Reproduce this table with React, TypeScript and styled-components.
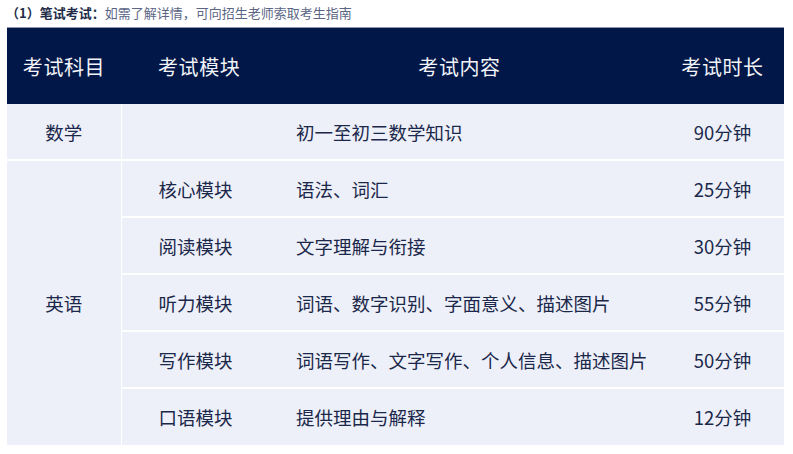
import React from "react";
import styled, { createGlobalStyle } from "styled-components";

const Global = createGlobalStyle`
  html, body { margin: 0; padding: 0; background: #fff; }
  body { font-family: "Noto Sans CJK SC", "Noto Sans", sans-serif; }
`;

const Page = styled.div`
  width: 793px;
  padding: 0 9px 0 7px;
  box-sizing: border-box;
`;

const Title = styled.p`
  margin: 0 0 0 -1px;
  height: 27px;
  line-height: 26px;
  font-size: 13px;
  color: #5b6685;
  white-space: nowrap;
  b {
    color: #222c48;
    font-weight: 700;
  }
`;

const Table = styled.table`
  width: 777px;
  border-collapse: collapse;
  table-layout: fixed;
  border-top: 1px solid #8c95ad;
`;

const Head = styled.th<{ $align?: string; $pad?: number }>`
  height: 76px;
  padding: 0 0 0 ${(p) => p.$pad ?? 0}px;
  background: #011747;
  color: #f1f3f8;
  font-size: 20px;
  font-weight: 400;
  text-align: ${(p) => p.$align ?? "center"};
  letter-spacing: 0.6px;
`;

const Cell = styled.td<{ $align?: string; $pad?: number; $divide?: boolean }>`
  height: 55px;
  padding: 0 0 0 ${(p) => p.$pad ?? 0}px;
  background: #edf0f8;
  color: #1b284b;
  font-size: 18.5px;
  text-align: ${(p) => p.$align ?? "left"};
  border-bottom: 2px solid #fff;
  border-right: ${(p) => (p.$divide ? "1px solid #fff" : "none")};
  white-space: nowrap;
`;

const LastRow = styled.tr`
  td { border-bottom: none; height: 56px; }
`;

type Row = { module: string; content: string; time: string };

const english: Row[] = [
  { module: "核心模块", content: "语法、词汇", time: "25分钟" },
  { module: "阅读模块", content: "文字理解与衔接", time: "30分钟" },
  { module: "听力模块", content: "词语、数字识别、字面意义、描述图片", time: "55分钟" },
  { module: "写作模块", content: "词语写作、文字写作、个人信息、描述图片", time: "50分钟" },
  { module: "口语模块", content: "提供理由与解释", time: "12分钟" },
];

export default function App() {
  return (
    <Page>
      <Global />
      <Title>
        <b>（1）笔试考试：</b>如需了解详情，可向招生老师索取考生指南
      </Title>
      <Table>
        <colgroup>
          <col style={{ width: 114 }} />
          <col style={{ width: 137 }} />
          <col style={{ width: 403 }} />
          <col style={{ width: 123 }} />
        </colgroup>
        <thead>
          <tr>
            <Head>考试科目</Head>
            <Head $align="left" $pad={37}>考试模块</Head>
            <Head>考试内容</Head>
            <Head>考试时长</Head>
          </tr>
        </thead>
        <tbody>
          <tr>
            <Cell $align="center" $divide>数学</Cell>
            <Cell $pad={37}></Cell>
            <Cell $pad={38}>初一至初三数学知识</Cell>
            <Cell $align="center">90分钟</Cell>
          </tr>
          {english.map((r, i) => {
            const cells = (
              <>
                {i === 0 && (
                  <Cell $align="center" $divide rowSpan={english.length} style={{ borderBottom: "none" }}>
                    英语
                  </Cell>
                )}
                <Cell $pad={37}>{r.module}</Cell>
                <Cell $pad={38}>{r.content}</Cell>
                <Cell $align="center">{r.time}</Cell>
              </>
            );
            return i === english.length - 1 ? (
              <LastRow key={r.module}>{cells}</LastRow>
            ) : (
              <tr key={r.module}>{cells}</tr>
            );
          })}
        </tbody>
      </Table>
    </Page>
  );
}
